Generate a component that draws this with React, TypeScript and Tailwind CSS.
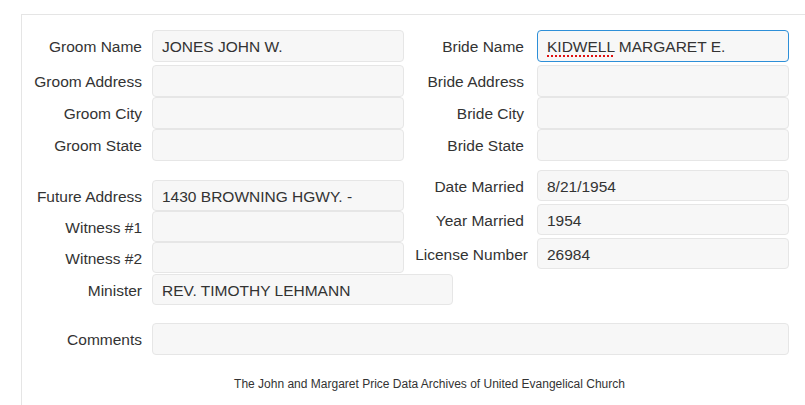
const font = { fontFamily: '"Liberation Sans", Arial, sans-serif' };

type Row = { label: string; value?: string; gap?: string; focus?: boolean };

const Field = ({ value, focus, width = "w-[252px]", h = "h-[32px]" }: { value?: string; focus?: boolean; width?: string; h?: string }) => (
    <div
        className={`${width} ${h} flex items-center pl-[9px] pt-[2px] rounded-[4px] bg-[#f7f7f7] text-[#333] border ${
            focus ? "border-[#2d8fd8]" : "border-[#e6e6e6]"
        }`}
    >
        {focus && value ? (
            <span>
                <span className="underline decoration-dotted decoration-[#e01010] decoration-2 underline-offset-[3px]">KIDWELL</span>
                {value.replace("KIDWELL", "")}
            </span>
        ) : (
            value
        )}
    </div>
);

const Label = ({ text, extra = "" }: { text: string; extra?: string }) => (
    <span className={`w-[120px] pt-[2px] text-right whitespace-nowrap ${extra}`}>{text}</span>
);

const groom: Row[] = [
    { label: "Groom Name", value: "JONES JOHN W.", gap: "mb-[3px]" },
    { label: "Groom Address" },
    { label: "Groom City" },
    { label: "Groom State" },
];

const bride: Row[] = [
    { label: "Bride Name", value: "KIDWELL MARGARET E.", gap: "mb-[3px]", focus: true },
    { label: "Bride Address" },
    { label: "Bride City" },
    { label: "Bride State" },
];

export default function App() {
    return (
        <div className="w-[805px] h-[405px] overflow-hidden bg-white pt-[14px] pl-[21px] text-[15.5px] text-[#333]" style={font}>
            <div className="w-[900px] h-[400px] border-l border-t border-[#e5e5e5] pt-[15px]">
                {/* Groom / Bride */}
                <div className="flex">
                    <div className="flex flex-col">
                        {groom.map((r) => (
                            <div key={r.label} className={`flex items-center gap-[10px] ${r.gap ?? ""}`}>
                                <Label text={r.label} />
                                <Field value={r.value} />
                            </div>
                        ))}
                    </div>
                    <div className="flex flex-col">
                        {bride.map((r) => (
                            <div key={r.label} className={`flex items-center gap-[13px] ${r.gap ?? ""}`}>
                                <Label text={r.label} />
                                <Field value={r.value} focus={r.focus} />
                            </div>
                        ))}
                    </div>
                </div>

                {/* Address / Witnesses / Marriage */}
                <div className="flex items-start mt-[9px]">
                    <div className="flex flex-col pt-[10px]">
                        {[
                            { label: "Future Address", value: "1430 BROWNING HGWY. -" },
                            { label: "Witness #1" },
                            { label: "Witness #2" },
                        ].map((r) => (
                            <div key={r.label} className="flex items-center gap-[10px]">
                                <Label text={r.label} />
                                <Field value={r.value} h="h-[31px]" />
                            </div>
                        ))}
                        <div className="flex items-center gap-[10px] mt-[1px]">
                            <Label text="Minister" />
                            <Field value="REV. TIMOTHY LEHMANN" width="w-[301px]" h="h-[31px]" />
                        </div>
                    </div>
                    <div className="flex flex-col gap-[3px] -ml-[49px]">
                        {[
                            { label: "Date Married", value: "8/21/1954" },
                            { label: "Year Married", value: "1954" },
                            { label: "License Number", value: "26984", extra: "translate-x-[4px]" },
                        ].map((r) => (
                            <div key={r.label} className="flex items-center gap-[13px]">
                                <Label text={r.label} extra={r.extra} />
                                <Field value={r.value} h="h-[31px]" />
                            </div>
                        ))}
                    </div>
                </div>

                {/* Comments */}
                <div className="flex items-center gap-[10px] mt-[18px]">
                    <Label text="Comments" />
                    <Field width="w-[637px]" />
                </div>

                <p className="w-[815px] text-center text-[12px] mt-[20px]">
                    The John and Margaret Price Data Archives of United Evangelical Church
                </p>
            </div>
        </div>
    );
}
